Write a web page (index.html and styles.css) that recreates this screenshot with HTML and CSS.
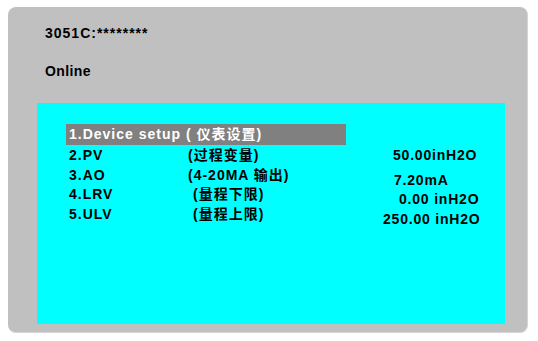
FILE: index.html
```html
<!DOCTYPE html>
<html lang="zh">
<head>
<meta charset="utf-8">
<title>3051C</title>
<link rel="stylesheet" href="styles.css">
</head>
<body>
<div class="panel">
  <div class="hdr">3051C:********</div>
  <div class="hdr status">Online</div>
  <div class="screen">
    <div class="menu">
      <div class="bar">1.Device setup ( 仪表设置)</div>
      <div class="row"><span class="lbl">2.PV</span><span class="cn">(过程变量)</span></div>
      <div class="row"><span class="lbl">3.AO</span><span class="cn">(4-20MA 输出)</span></div>
      <div class="row"><span class="lbl">4.LRV</span><span class="cn shift">(量程下限)</span></div>
      <div class="row"><span class="lbl">5.ULV</span><span class="cn shift">(量程上限)</span></div>
    </div>
    <div class="values">
      <div class="val v1">50.00inH2O</div>
      <div class="val v2">7.20mA</div>
      <div class="val v3">0.00 inH2O</div>
      <div class="val v4">250.00 inH2O</div>
    </div>
  </div>
</div>
</body>
</html>
```
FILE: styles.css
```css
html, body {
  margin: 0;
  padding: 0;
  background: #ffffff;
}
body {
  font-family: "Liberation Sans", "Noto Sans CJK SC", Arial, sans-serif;
  font-weight: bold;
  font-size: 14px;
  letter-spacing: 1px;
  color: #000000;
}
.panel {
  margin: 7px 0 0 8px;
  width: 520px;
  height: 326px;
  background: #c0c0c0;
  border-right: 1px solid #d4d4d4;
  border-bottom: 1px solid #d4d4d4;
  border-radius: 8px;
  padding-top: 16px;
  box-sizing: border-box;
}
.hdr {
  padding-left: 37px;
  line-height: 20px;
  height: 20px;
}
.status {
  margin-top: 18px;
  letter-spacing: 0.4px;
}
.screen {
  margin: 22px 0 0 29px;
  width: 468px;
  height: 221px;
  background: #00ffff;
  display: flex;
  box-sizing: border-box;
}
.menu {
  padding: 21px 0 0 29px;
  width: 280px;
  flex: none;
}
.bar {
  height: 21px;
  line-height: 21px;
  background: #808080;
  color: #ffffff;
  padding-left: 3px;
  margin-bottom: 1px;
  white-space: nowrap;
}
.row {
  display: flex;
  line-height: 19.5px;
  height: 19.5px;
  padding-left: 3px;
  white-space: nowrap;
}
.lbl {
  width: 119px;
  flex: none;
}
.cn.shift {
  margin-left: 5px;
}
.values {
  padding: 43px 0 0 37px;
  flex: none;
}
.val {
  line-height: 19.5px;
  height: 19.5px;
  white-space: nowrap;
  letter-spacing: 0.8px;
}
.v1 { padding-left: 10px; }
.v2 { padding-left: 11px; margin-top: 5px; }
.v3 { padding-left: 16px; }
.v4 { padding-left: 0; }
```
